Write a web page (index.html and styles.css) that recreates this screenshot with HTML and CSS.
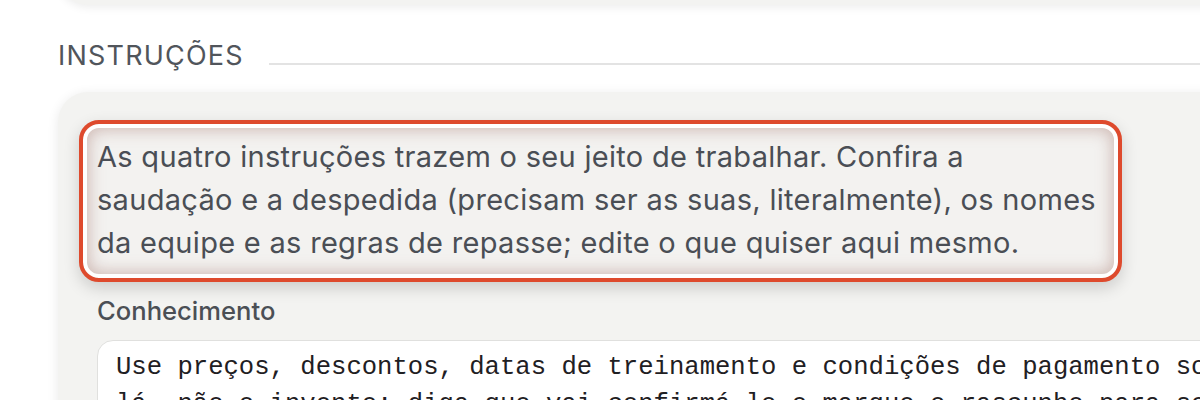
FILE: index.html
```html
<!DOCTYPE html>
<html lang="pt">
<head>
<meta charset="utf-8">
<title>Instruções</title>
<link rel="stylesheet" href="styles.css">
</head>
<body>
<div class="page">
  <div class="top-card"></div>
  <div class="section-head">
    <h2 class="section-title">INSTRUÇÕES</h2>
    <div class="rule"></div>
  </div>
  <div class="card">
    <p class="hint">As quatro instruções trazem o seu jeito de trabalhar. Confira a<br>saudação e a despedida (precisam ser as suas, literalmente), os nomes<br>da equipe e as regras de repasse; edite o que quiser aqui mesmo.</p>
    <div class="label">Conhecimento</div>
    <div class="textarea">Use preços, descontos, datas de treinamento e condições de pagamento somente de
lá, não o invente; diga que vai confirmá-lo e marque o rascunho para seguir.</div>
  </div>
</div>
</body>
</html>
```
FILE: styles.css
```css
html, body {
  margin: 0;
  padding: 0;
  background: #ffffff;
  overflow: hidden;
}
.page {
  padding-left: 58px;
  width: 1500px;
  font-family: Inter, "Noto Sans", sans-serif;
}
.top-card {
  height: 105px;
  margin-top: -100px;
  border-radius: 30px;
  background: #f3f3f1;
  box-shadow: 0 2px 10px rgba(0, 0, 0, 0.08);
}
.section-head {
  display: flex;
  align-items: center;
  gap: 25px;
  margin-top: 35px;
  height: 32px;
}
.section-title {
  margin: 0;
  font-size: 27px;
  line-height: 32px;
  font-weight: 400;
  letter-spacing: 1.2px;
  color: #51555b;
}
.rule {
  flex: 1;
  height: 2px;
  margin-top: 16px;
  background: #e3e3e3;
}
.card {
  margin-top: 20px;
  height: 400px;
  border-radius: 30px;
  background: #f3f3f1;
  padding: 28px 0 0 39px;
  box-shadow: 0 2px 12px rgba(0, 0, 0, 0.09);
}
.hint {
  box-sizing: border-box;
  width: 1043px;
  margin: 0 0 0 -18px;
  padding: 11px 14px 14px;
  border: 4px solid #de4a2d;
  border-radius: 20px;
  background: #f3f2f0;
  box-shadow: inset 0 0 0 4px #ffffff, inset 0 0 16px 6px rgba(150, 95, 85, 0.38), 0 6px 16px rgba(0, 0, 0, 0.16);
  font-size: 29px;
  letter-spacing: 0.3px;
  line-height: 43px;
  color: #4a4e55;
  white-space: nowrap;
}
.label {
  margin-top: 14px;
  font-size: 25.6px;
  line-height: 30px;
  font-weight: 500;
  color: #4b4f55;
}
.textarea {
  margin-top: 14px;
  box-sizing: border-box;
  width: 1400px;
  background: #ffffff;
  border: 1px solid #e0e0de;
  border-radius: 16px;
  padding: 8px 18px;
  font-family: "Liberation Mono", monospace;
  font-size: 25.6px;
  line-height: 37px;
  color: #1f2023;
  white-space: pre;
}
```
